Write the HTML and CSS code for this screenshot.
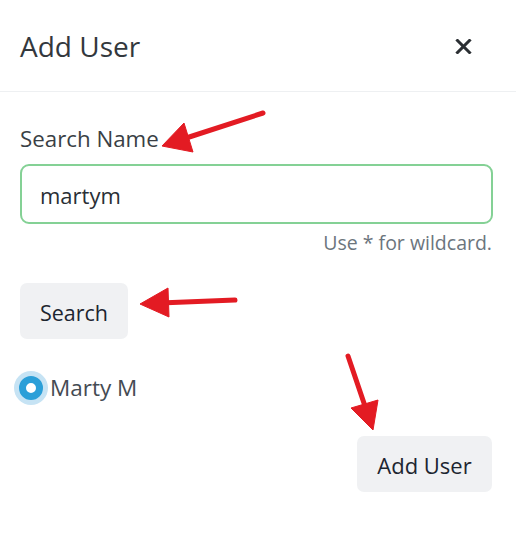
FILE: index.html
```html
<!DOCTYPE html>
<html lang="en">
<head>
<meta charset="utf-8">
<title>Add User</title>
<link rel="stylesheet" href="styles.css">
</head>
<body>
<div class="modal">
  <div class="modal-header">
    <h5 class="modal-title">Add User</h5>
    <button class="close" type="button" aria-label="Close">
      <svg width="17" height="15" viewBox="0 0 17 15"><path d="M2.5 1.5 L14.5 13.5 M14.5 1.5 L2.5 13.5" stroke="#2b2f33" stroke-width="3" stroke-linecap="square" fill="none"/></svg>
    </button>
  </div>
  <div class="modal-body">
    <label class="form-label" for="name">Search Name</label>
    <input id="name" class="form-control" type="text" value="martym">
    <div class="form-text">Use * for wildcard.</div>
    <div class="search-row"><button class="btn" type="button">Search</button></div>
    <label class="radio-row"><span class="radio"></span><span class="radio-label">Marty M</span></label>
    <div class="footer-row"><button class="btn btn-add" type="button">Add User</button></div>
  </div>
</div>
<svg class="annotations" width="516" height="552" viewBox="0 0 516 552">
  <g fill="#e31b23" stroke="#e31b23">
    <line x1="263" y1="113" x2="180" y2="140" stroke-width="5" stroke-linecap="round"/>
    <polygon points="162,146 184,123 193,152" stroke-width="1"/>
    <line x1="235" y1="300" x2="160" y2="303" stroke-width="5" stroke-linecap="round"/>
    <polygon points="140,304 168,288 169,317" stroke-width="1"/>
    <line x1="348" y1="356" x2="367" y2="412" stroke-width="5" stroke-linecap="round"/>
    <polygon points="373,430 351,408 378,400" stroke-width="1"/>
  </g>
</svg>
</body>
</html>
```
FILE: styles.css
```css
* { box-sizing: border-box; }
html, body { margin: 0; padding: 0; background: #fff; }
body {
  width: 516px;
  height: 552px;
  position: relative;
  overflow: hidden;
  font-family: "Open Sans", "Noto Sans", sans-serif;
  color: #212529;
}
.modal { width: 516px; }
.modal-header {
  display: flex;
  align-items: flex-start;
  justify-content: space-between;
  padding: 30px 44px 29px 20px;
  border-bottom: 1px solid #eef0f2;
  height: 92px;
}
.modal-title {
  margin: 0;
  font-size: 28px;
  line-height: 32px;
  font-weight: 400;
  color: #33383d;
}
.close {
  border: 0;
  background: none;
  padding: 0;
  margin-top: 9px;
  width: 17px;
  height: 15px;
  display: flex;
}
.modal-body {
  display: flex;
  flex-direction: column;
  padding: 0 23px 0 20px;
}
.form-label {
  margin-top: 32px;
  font-size: 22.3px;
  line-height: 30px;
  color: #3a3f45;
}
.form-control {
  margin-top: 10px;
  height: 60px;
  width: 100%;
  border: 2px solid #84d195;
  border-radius: 9px;
  padding: 2px 18px 0;
  font-family: inherit;
  font-size: 22px;
  color: #2a2f35;
  outline: none;
}
.form-text {
  margin-top: 7px;
  text-align: right;
  font-size: 19.5px;
  line-height: 24px;
  color: #6c757d;
  padding-right: 1px;
}
.search-row { margin-top: 28px; display: flex; }
.btn {
  border: 0;
  border-radius: 7px;
  background: #f0f1f3;
  height: 56px;
  padding: 2px 0 0;
  font-family: inherit;
  font-size: 21.5px;
  color: #1d2530;
}
.search-row .btn { width: 108px; }
.radio-row {
  margin-top: 32px;
  display: flex;
  align-items: center;
  height: 34px;
}
.radio {
  width: 24px;
  height: 24px;
  margin-left: -1px;
  border-radius: 50%;
  border: 7px solid #2b9fd8;
  background: #fff;
  box-shadow: 0 0 0 5px #c6e3f4;
  flex: none;
}
.radio-label {
  margin-left: 7px;
  font-size: 22.5px;
  line-height: 30px;
  color: #454b53;
}
.footer-row {
  margin-top: 31px;
  display: flex;
  justify-content: flex-end;
  padding-right: 1px;
}
.btn-add { width: 135px; font-size: 22px; }
.annotations {
  position: absolute;
  left: 0;
  top: 0;
  pointer-events: none;
}
```
